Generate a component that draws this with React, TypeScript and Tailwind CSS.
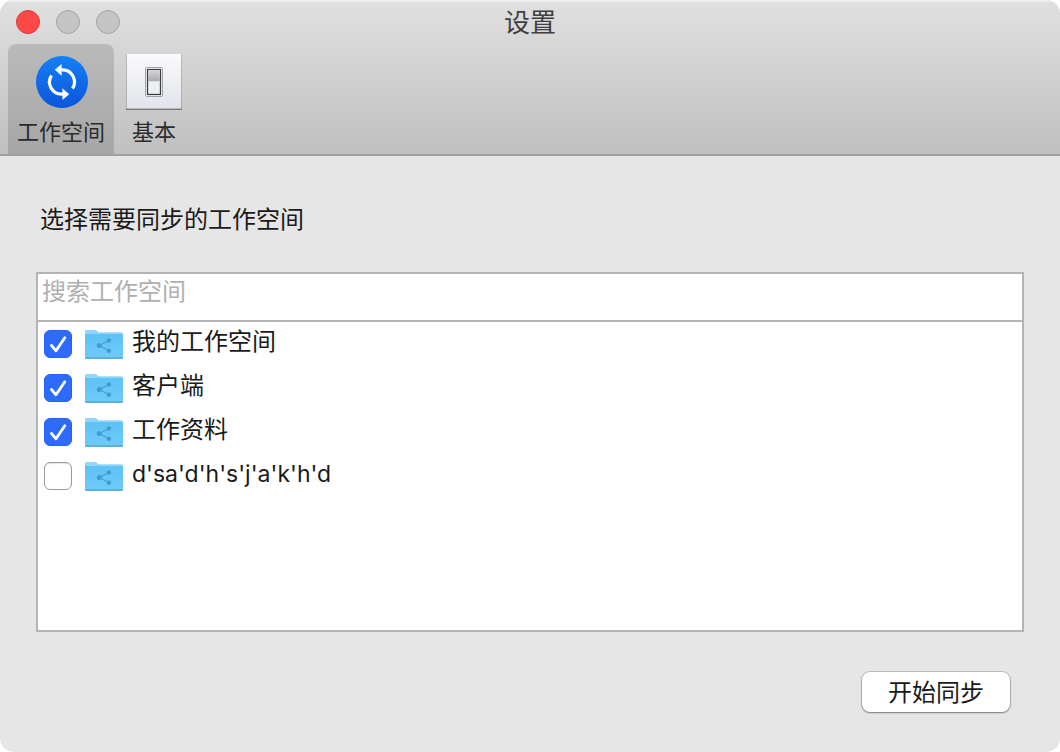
import { useState } from "react";

interface Workspace {
  id: number;
  name: string;
  synced: boolean;
}

const initialWorkspaces: Workspace[] = [
  { id: 1, name: "我的工作空间", synced: true },
  { id: 2, name: "客户端", synced: true },
  { id: 3, name: "工作资料", synced: true },
  { id: 4, name: "d'sa'd'h's'j'a'k'h'd", synced: false },
];

// Inter runs wide next to the CJK face, so plain Latin names are set a touch smaller
const isLatin = (text: string) => /^[\x20-\x7e]+$/.test(text);

function SyncIcon() {
  return (
    <svg width="56" height="56" viewBox="0 0 56 56" aria-hidden="true">
      <defs>
        <linearGradient id="sync-bg" x1="0" y1="0" x2="0" y2="1">
          <stop offset="0" stopColor="#1580f5" />
          <stop offset="1" stopColor="#0b55dc" />
        </linearGradient>
      </defs>
      <circle cx="29" cy="28" r="26" fill="url(#sync-bg)" />
      <g fill="none" stroke="#fff" strokeWidth="3.2">
        <path d="M18.5 21.5A12 12 0 0 0 30 40" />
        <path d="M39.5 34.5A12 12 0 0 0 28 16" />
      </g>
      <path d="M28.6 10v11.8L21.8 15.7zM29.4 46V34.2l6.8 6.1z" fill="#fff" />
    </svg>
  );
}

function SwitchIcon() {
  return (
    <svg width="56" height="56" viewBox="0 0 56 56" aria-hidden="true">
      <defs>
        <linearGradient id="plate" x1="0" y1="0" x2="0" y2="1">
          <stop offset="0" stopColor="#fafafc" />
          <stop offset="1" stopColor="#e2e4ea" />
        </linearGradient>
        <linearGradient id="rocker" x1="0" y1="0" x2="0" y2="1">
          <stop offset="0" stopColor="#d4d4d6" />
          <stop offset="1" stopColor="#a9aaad" />
        </linearGradient>
      </defs>
      <rect width="56" height="56" fill="#77787a" />
      <rect x="0.5" width="55" height="54.6" fill="url(#plate)" />
      <rect x="19.5" y="13.5" width="17" height="29" rx="1.5" fill="#fff" stroke="#a3a4a8" />
      <rect x="21.5" y="15.5" width="13" height="25" fill="#eceef2" stroke="#3b3c3f" strokeWidth="1.3" />
      <rect x="22.2" y="16.2" width="11.6" height="11" fill="url(#rocker)" />
    </svg>
  );
}

function FolderIcon() {
  return (
    <svg width="40" height="32" viewBox="0 0 40 32" className="shrink-0" aria-hidden="true">
      <defs>
        <linearGradient id="folder" x1="0" y1="0" x2="0" y2="1">
          <stop offset="0" stopColor="#5fc1f5" />
          <stop offset="1" stopColor="#6fccfb" />
        </linearGradient>
      </defs>
      <path d="M1 3.5Q1 2 2.5 2H11q1.2 0 2 1l1.5 1.2H37q2 0 2 2V12H1z" fill="#8fd8fb" />
      <path d="M1 6h38V29.5q0 1.5-1.5 1.5h-35Q1 31 1 29.5z" fill="url(#folder)" />
      <path d="M1 29.3h38v.2q0 1.5-1.5 1.5h-35Q1 31 1 29.5z" fill="#58acd8" />
      <path d="M25 12.5 15.5 17.5l9.5 5.2" fill="none" stroke="#489fd2" strokeWidth="1.1" />
      <g fill="#459bce">
        <circle cx="24.8" cy="12.5" r="2.3" />
        <circle cx="15.3" cy="17.5" r="2.5" />
        <circle cx="24.8" cy="22.7" r="2.3" />
      </g>
    </svg>
  );
}

function WorkspaceRow({ workspace, onToggle }: { workspace: Workspace; onToggle: () => void }) {
  return (
    <li>
      <label className="flex h-11 items-center pl-1.5">
        <span className="grid shrink-0">
          <input
            type="checkbox"
            checked={workspace.synced}
            onChange={onToggle}
            className="peer col-start-1 row-start-1 size-7 appearance-none rounded-md border border-[#9c9c9c] bg-white shadow-[inset_0_1px_1px_rgba(0,0,0,0.12)] checked:border-[#2463ee] checked:bg-[#2d6cfb] checked:shadow-none"
          />
          <svg
            viewBox="0 0 28 28"
            className="pointer-events-none invisible col-start-1 row-start-1 size-7 peer-checked:visible"
            aria-hidden="true"
          >
            <path
              d="M7.5 15.5 12 20.8 20.8 7.8"
              fill="none"
              stroke="#fff"
              strokeWidth="2.8"
              strokeLinecap="round"
              strokeLinejoin="round"
            />
          </svg>
        </span>
        <span className="ml-3 flex">
          <FolderIcon />
        </span>
        <span className={`ml-2 pb-1 ${isLatin(workspace.name) ? "text-[23px]" : ""}`}>{workspace.name}</span>
      </label>
    </li>
  );
}

export default function App() {
  const [tab, setTab] = useState("workspace");
  const [query, setQuery] = useState("");
  const [workspaces, setWorkspaces] = useState(initialWorkspaces);

  const toggle = (id: number) =>
    setWorkspaces((list) => list.map((w) => (w.id === id ? { ...w, synced: !w.synced } : w)));

  const tabs = [
    { id: "workspace", label: "工作空间", icon: <SyncIcon /> },
    { id: "basic", label: "基本", icon: <SwitchIcon /> },
  ];

  return (
    <div className="flex min-h-screen flex-col overflow-hidden rounded-[14px] bg-[#e6e6e6] font-[Inter,'Noto_Sans_CJK_SC',sans-serif] text-2xl text-[#1a1a1a]">
      <header className="border-b-2 border-[#a0a0a0] bg-linear-to-b from-[#e0e0e0] to-[#c0c0c0] shadow-[inset_0_2px_0_#efefef]">
        <div className="grid h-11 grid-cols-[1fr_auto_1fr] items-center px-4">
          <div className="flex gap-4">
            <button aria-label="关闭" className="size-6 rounded-full border border-[#dc3938] bg-[#fc4948]" />
            <button aria-label="最小化" className="size-6 rounded-full border border-[#a5a5a5] bg-[#c4c4c4]" />
            <button aria-label="缩放" className="size-6 rounded-full border border-[#a5a5a5] bg-[#c4c4c4]" />
          </div>
          <h1 className="pt-0.5 text-[26px] text-[#404040]">设置</h1>
        </div>
        <nav className="flex gap-1 px-2">
          {tabs.map((t) => (
            <button
              key={t.id}
              onClick={() => setTab(t.id)}
              className={`flex h-[110px] flex-col items-center rounded-t-lg px-2 pt-2.5 text-[22px] leading-8 text-[#2b2b2b] ${
                tab === t.id ? "bg-linear-to-b from-[#bababa] to-[#a6a6a6]" : ""
              }`}
            >
              {t.icon}
              <span className="mt-1.5 px-px">{t.label}</span>
            </button>
          ))}
        </nav>
      </header>

      <main className="flex flex-1 flex-col px-9 pt-11 pb-10">
        <h2 className="px-1 leading-10">选择需要同步的工作空间</h2>
        <section className="mt-8 flex flex-1 flex-col border-2 border-[#b4b4b4] bg-white">
          <input
            type="text"
            aria-label="搜索工作空间"
            placeholder="搜索工作空间"
            value={query}
            onChange={(e) => setQuery(e.target.value)}
            className="h-12 w-full border-b-2 border-[#b4b4b4] px-1 pb-3 outline-none placeholder:text-[#b0b0b0]"
          />
          <ul>
            {workspaces
              .filter((w) => w.name.includes(query))
              .map((w) => (
                <WorkspaceRow key={w.id} workspace={w} onToggle={() => toggle(w.id)} />
              ))}
          </ul>
        </section>
        <button className="mt-10 mr-3.5 h-10 self-end rounded-lg bg-white px-[26px] pt-0.5 shadow-[0_0_0_1px_rgba(0,0,0,0.18),0_1px_2px_rgba(0,0,0,0.35)]">
          开始同步
        </button>
      </main>
    </div>
  );
}
